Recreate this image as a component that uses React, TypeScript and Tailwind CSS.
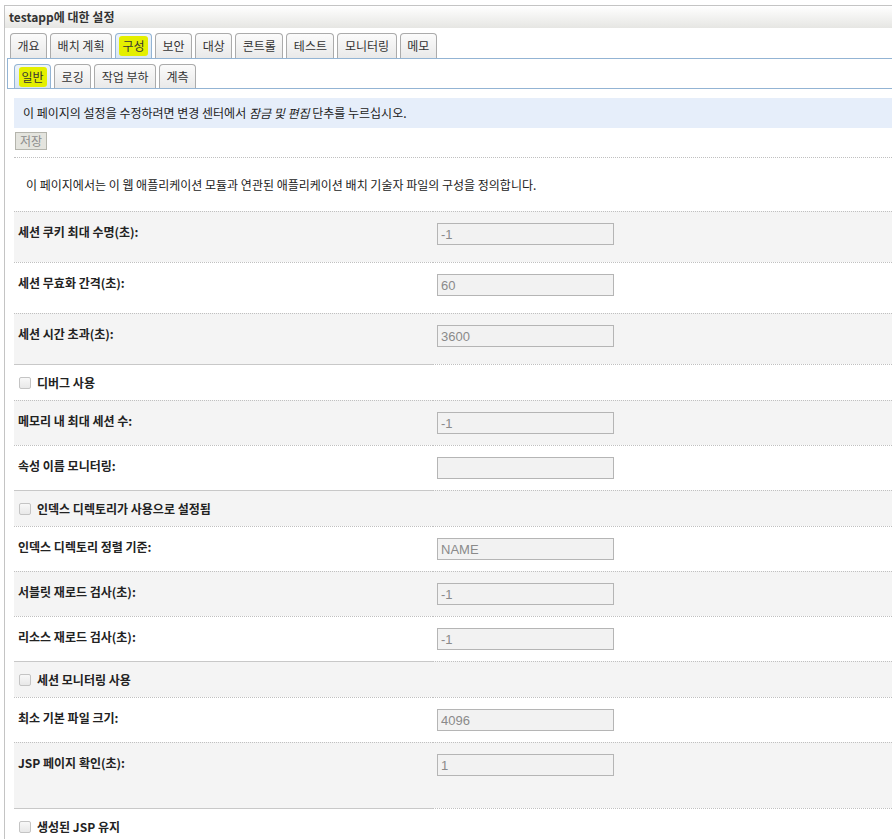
import React from "react";

type Row =
  | { kind: "field"; label: string; value: string; h: string; gray: boolean; solid?: boolean }
  | { kind: "check"; label: string; h: string; gray: boolean; solid?: boolean };

const mainTabs = ["개요", "배치 계획", "구성", "보안", "대상", "콘트롤", "테스트", "모니터링", "메모"];
const subTabs = ["일반", "로깅", "작업 부하", "계측"];

const rows: Row[] = [
  { kind: "field", label: "세션 쿠키 최대 수명(초):", value: "-1", h: "h-[51px]", gray: true },
  { kind: "field", label: "세션 무효화 간격(초):", value: "60", h: "h-[51px]", gray: false },
  { kind: "field", label: "세션 시간 초과(초):", value: "3600", h: "h-[51px]", gray: true },
  { kind: "check", label: "디버그 사용", h: "h-[36px]", gray: false, solid: true },
  { kind: "field", label: "메모리 내 최대 세션 수:", value: "-1", h: "h-[45px]", gray: true },
  { kind: "field", label: "속성 이름 모니터링:", value: "", h: "h-[45px]", gray: false },
  { kind: "check", label: "인덱스 디렉토리가 사용으로 설정됨", h: "h-[36px]", gray: true, solid: true },
  { kind: "field", label: "인덱스 디렉토리 정렬 기준:", value: "NAME", h: "h-[45px]", gray: false },
  { kind: "field", label: "서블릿 재로드 검사(초):", value: "-1", h: "h-[45px]", gray: true },
  { kind: "field", label: "리소스 재로드 검사(초):", value: "-1", h: "h-[45px]", gray: false },
  { kind: "check", label: "세션 모니터링 사용", h: "h-[36px]", gray: true, solid: true },
  { kind: "field", label: "최소 기본 파일 크기:", value: "4096", h: "h-[45px]", gray: false },
  { kind: "field", label: "JSP 페이지 확인(초):", value: "1", h: "h-[66px]", gray: true },
  { kind: "check", label: "생성된 JSP 유지", h: "h-[36px]", gray: false, solid: true },
];

const Highlight = ({ children }: { children: React.ReactNode }) => (
  <span className="bg-[#e4ef00] px-[3px] py-[4px] -mx-[3px] rounded-[3px]">{children}</span>
);

const Tab = ({ label, active }: { label: string; active?: boolean }) => (
  <div
    className={`flex items-center px-[6.5px] border border-b-0 rounded-t-[4px] text-[12px] text-[#333] ${
      active
        ? "bg-gradient-to-b from-[#eef4fa] to-[#d8e5f2] border-[#93b4d4]"
        : "bg-gradient-to-b from-[#fbfbfb] to-[#e9e9e9] border-[#ababab]"
    }`}
  >
    {active ? <Highlight>{label}</Highlight> : label}
  </div>
);

const CheckBox = () => (
  <span className="inline-block w-[12px] h-[12px] rounded-[2px] border border-[#c4c4c4] bg-gradient-to-b from-[#f8f8f8] to-[#e8e8e8]" />
);

export default function App() {
  return (
    <div
      className="min-h-screen bg-white text-[#222] pt-[5px] pl-[4px]"
      style={{ fontFamily: "'Noto Sans CJK KR', 'Liberation Sans', sans-serif" }}
    >
      <div className="border-l border-t border-[#c4c4c4] pb-[20px]">
        {/* title bar */}
        <div className="h-[22px] flex items-center pl-[4px] bg-gradient-to-b from-white to-[#e6e6e3] text-[12px] font-bold text-[#333] leading-none">
          testapp에 대한 설정
        </div>

        {/* tabs */}
        <div className="ml-[2px] mt-[5px]">
          <div className="flex gap-[3px] pl-[3px] h-[25px] leading-none">
            {mainTabs.map((t) => (
              <Tab key={t} label={t} active={t === "구성"} />
            ))}
          </div>
          <div className="border-t border-l border-b border-[#93b4d4] pt-[5px] pl-[6px]">
            <div className="flex gap-[3px] h-[24px] leading-none">
              {subTabs.map((t) => (
                <Tab key={t} label={t} active={t === "일반"} />
              ))}
            </div>
          </div>
        </div>

        {/* content */}
        <div className="ml-[9px] text-[12px]">
          <div className="mt-[9px] h-[30px] flex items-center pl-[9px] bg-[#e6eefa] text-[#222]">
            이 페이지의 설정을 수정하려면 변경 센터에서&nbsp;<i>잠금 및 편집</i>&nbsp;단추를 누르십시오.
          </div>
          <button
            type="button"
            className="mt-[4px] ml-[1px] h-[18px] w-[32px] flex items-center justify-center border border-[#b4b4ac] bg-[#e4e4de] text-[#8c8c8c] text-[12px] leading-none"
          >
            저장
          </button>
          <div className="mt-[7px] border-t border-dotted border-[#c0c0c0]" />
          <div className="h-[53px] flex items-center pl-[12px] text-[#222]">
            이 페이지에서는 이 웹 애플리케이션 모듈과 연관된 애플리케이션 배치 기술자 파일의 구성을 정의합니다.
          </div>

          {rows.map((r) => (
            <div key={r.label} className={`flex ${r.h} ${r.gray ? "bg-[#f4f4f4]" : "bg-white"}`}>
              <div
                className={`w-[419px] shrink-0 border-t ${
                  r.solid ? "border-solid border-[#c8c8c8]" : "border-dotted border-[#c0c0c0]"
                } ${r.kind === "check" ? "flex items-center pl-[5px] gap-[6px]" : "pl-[4px] pt-[11px]"}`}
              >
                {r.kind === "check" ? (
                  <>
                    <CheckBox />
                    <span className="font-bold leading-[14px]">{r.label}</span>
                  </>
                ) : (
                  <span className="font-bold leading-[14px]">{r.label}</span>
                )}
              </div>
              <div className="flex-1 border-t border-dotted border-[#c0c0c0] pl-[4px] pt-[11px]">
                {r.kind === "field" && (
                  <input
                    readOnly
                    value={r.value}
                    className="block w-[177px] h-[22px] border border-[#b5b5b5] bg-[#f2f2f2] px-[3px] text-[13px] text-[#8a8a8a] outline-none"
                    style={{ fontFamily: "'Liberation Sans', Arial, sans-serif" }}
                  />
                )}
              </div>
            </div>
          ))}
        </div>
      </div>
    </div>
  );
}
